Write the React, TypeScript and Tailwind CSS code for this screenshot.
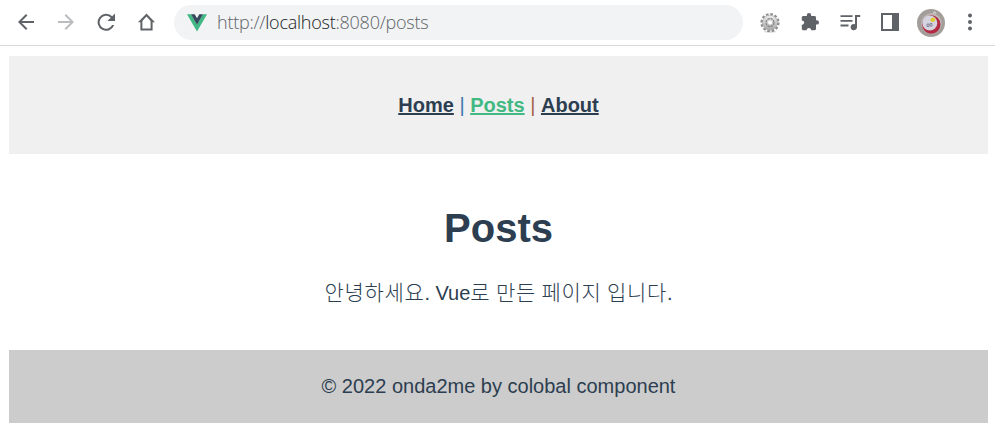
import React from "react";

const Ko = ({ children }: { children: React.ReactNode }) => (
  <span className="font-['Noto_Sans_CJK_KR',sans-serif] font-light text-[21px] tracking-[0.68px]">{children}</span>
);

function Icon({ d, className = "", fill = "#5f6368" }: { d: string; className?: string; fill?: string }) {
  return (
    <svg viewBox="0 0 24 24" fill={fill} className={`size-6 shrink-0 ${className}`}>
      <path d={d} />
    </svg>
  );
}

function Gear() {
  return (
    <svg viewBox="0 0 20 20" className="size-5 shrink-0">
      <defs>
        <linearGradient id="gear" x1="0" y1="0" x2="0" y2="1">
          <stop offset="0" stopColor="#eeeeee" />
          <stop offset="1" stopColor="#a8a8a8" />
        </linearGradient>
      </defs>
      <ellipse cx="10" cy="18.800" rx="6" ry="1" fill="#ddd" />
      <circle cx="10" cy="9.600" r="8.400" fill="none" stroke="#8c8c8c" strokeWidth="2.400" strokeDasharray="2.600 1.800" />
      <circle cx="10" cy="9.600" r="7.500" fill="url(#gear)" stroke="#a4a4a4" strokeWidth=".7" />
      <circle cx="10" cy="9.600" r="4" fill="none" stroke="#858585" strokeWidth="1.200" strokeDasharray="2.400 .740" />
      <circle cx="10" cy="9.600" r="2" fill="#fff" />
    </svg>
  );
}

function Avatar() {
  return (
    <svg viewBox="0 0 28 28" className="size-7 shrink-0">
      <circle cx="14" cy="14" r="14" fill="#a39e99" />
      <circle cx="14.500" cy="14.500" r="10.200" fill="#bdb8b5" />
      <circle cx="14.300" cy="15.500" r="9.200" fill="#b32b43" />
      <circle cx="12.800" cy="14" r="7.500" fill="#d5d3df" />
      <path d="M16 5l1.500-2.500L19 5" stroke="#ddd" fill="none" />
      <path d="M13 10.500l2.500-2 3 1-1 3-3 .5z" fill="#e0ca2c" />
      <path d="M10 15h2v2.500h-2zM13 14.500h2v2.500h-2z" fill="none" stroke="#77738a" strokeWidth=".8" />
    </svg>
  );
}

function Toolbar() {
  return (
    <header className="flex h-[46px] items-center border-b border-[#d9dadc] bg-white pl-[14px]">
      <Icon className="mb-px" d="M20 11H7.830l5.590-5.590L12 4l-8 8 8 8 1.410-1.410L7.830 13H20v-2z" />
      <Icon className="mb-px ml-4" fill="#babcbe" d="M12 4l-1.410 1.410L16.170 11H4v2h12.170l-5.580 5.590L12 20l8-8z" />
      <Icon className="mb-px ml-4" d="M18.200 6.300A8.500 8.500 0 1 0 20.200 15h-2.150A6.500 6.500 0 1 1 16.750 7.700L13.400 11H21V3.600z" />
      <Icon className="mb-px ml-4" d="M12.500 3.500L4 12.200h2.400v8.300h12.200v-8.300H21zM8.400 18.600v-7.700l4.100-4.400 4.100 4.400v7.700z" />
      <div className="ml-4 flex h-[35px] w-[569px] items-center rounded-full bg-[#f1f3f4] pl-[13px]">
        <svg viewBox="0 0 20 18" className="h-[18px] w-5 shrink-0">
          <path d="M0 .3h4L10 10.500 16 .3h4L10 17.600z" fill="#41b883" />
          <path d="M4 .3h3.700L10 4.200 12.300 .3H16L10 10.700z" fill="#35495e" />
        </svg>
        <span className="ml-[10px] pb-px whitespace-nowrap font-['Open_Sans',sans-serif] text-[18px] leading-6 font-[350] tracking-[-0.24px] text-[#5f6368]">
          http://<span className="text-[#202124]">localhost</span>:8080/posts
        </span>
      </div>
      <div className="ml-[17px] flex items-center">
        <Gear />
        <svg viewBox="0 0 18 18" fill="#5f6368" className="mb-px ml-[21px] size-[18px] shrink-0">
          <path d="M15.800 7.200H15V4.500c0-.9-.6-1.500-1.500-1.500H10.200V2.200a2.200 2.200 0 0 0-4.400 0V3H2.500C1.500 3 .8 3.600.8 4.500v2.900c1.500.1 2.400 1 2.400 2.200S2.300 11.800.8 11.900v3.600c0 1 .7 1.800 1.700 1.800h3.200c.1-1.500 1-2.300 2.200-2.300s2.200.8 2.300 2.300h3.300c.9 0 1.500-.7 1.500-1.700v-4h.8a2.200 2.200 0 0 0 0-4.400z" />
        </svg>
        <Icon className="mb-px ml-[19px]" d="M14.500 5.200H2.500v1.900h12V5.200zm0 4.700H2.500v1.900h12V9.900zM2.500 16.500h8v-1.900h-8v1.900zM17 5v9.200a3.200 3.200 0 1 0 2 3V7h3.200V5z" />
        <Icon className="mb-px ml-4" d="M3 3h18v18H3zM5 5v14h9V5z" />
        <div className="ml-[15px]"><Avatar /></div>
        <Icon className="mb-px ml-[13px]" d="M12 7.500a2 2 0 1 0 0-4 2 2 0 0 0 0 4zm0 2.500a2 2 0 1 0 0 4 2 2 0 0 0 0-4zm0 6.500a2 2 0 1 0 0 4 2 2 0 0 0 0-4z" />
      </div>
    </header>
  );
}

export default function App() {
  return (
    <div className="h-[433px] w-[995px] overflow-hidden bg-white font-['Liberation_Sans','Noto_Sans_CJK_KR',sans-serif] text-[20px] text-[#2c3e50]">
      <Toolbar />
      <div className="mt-[10px] mr-[7px] ml-[9px] text-center">
        <nav className="h-[98px] bg-[#f0f0f0] pt-[37px] leading-6">
          <a className="font-bold underline">Home</a> <span className="text-[#3a79ad]">|</span>{" "}
          <a className="font-bold text-[#42b983] underline">Posts</a> <span className="text-[#a5644a]">|</span>{" "}
          <a className="font-bold underline">About</a>
        </nav>
        <main className="h-[196px] pt-[50px]">
          <h1 className="text-[40px] leading-[48px] font-bold">Posts</h1>
          <p className="mt-[27px] leading-6 whitespace-nowrap">
            <Ko>안녕하세요</Ko>. Vue<Ko>로</Ko> <Ko>만든</Ko> <Ko>페이지</Ko> <Ko>입니다</Ko>.
          </p>
        </main>
        <footer className="h-[73px] bg-[#ccc] pt-6 leading-6">© 2022 onda2me by colobal component</footer>
      </div>
    </div>
  );
}
